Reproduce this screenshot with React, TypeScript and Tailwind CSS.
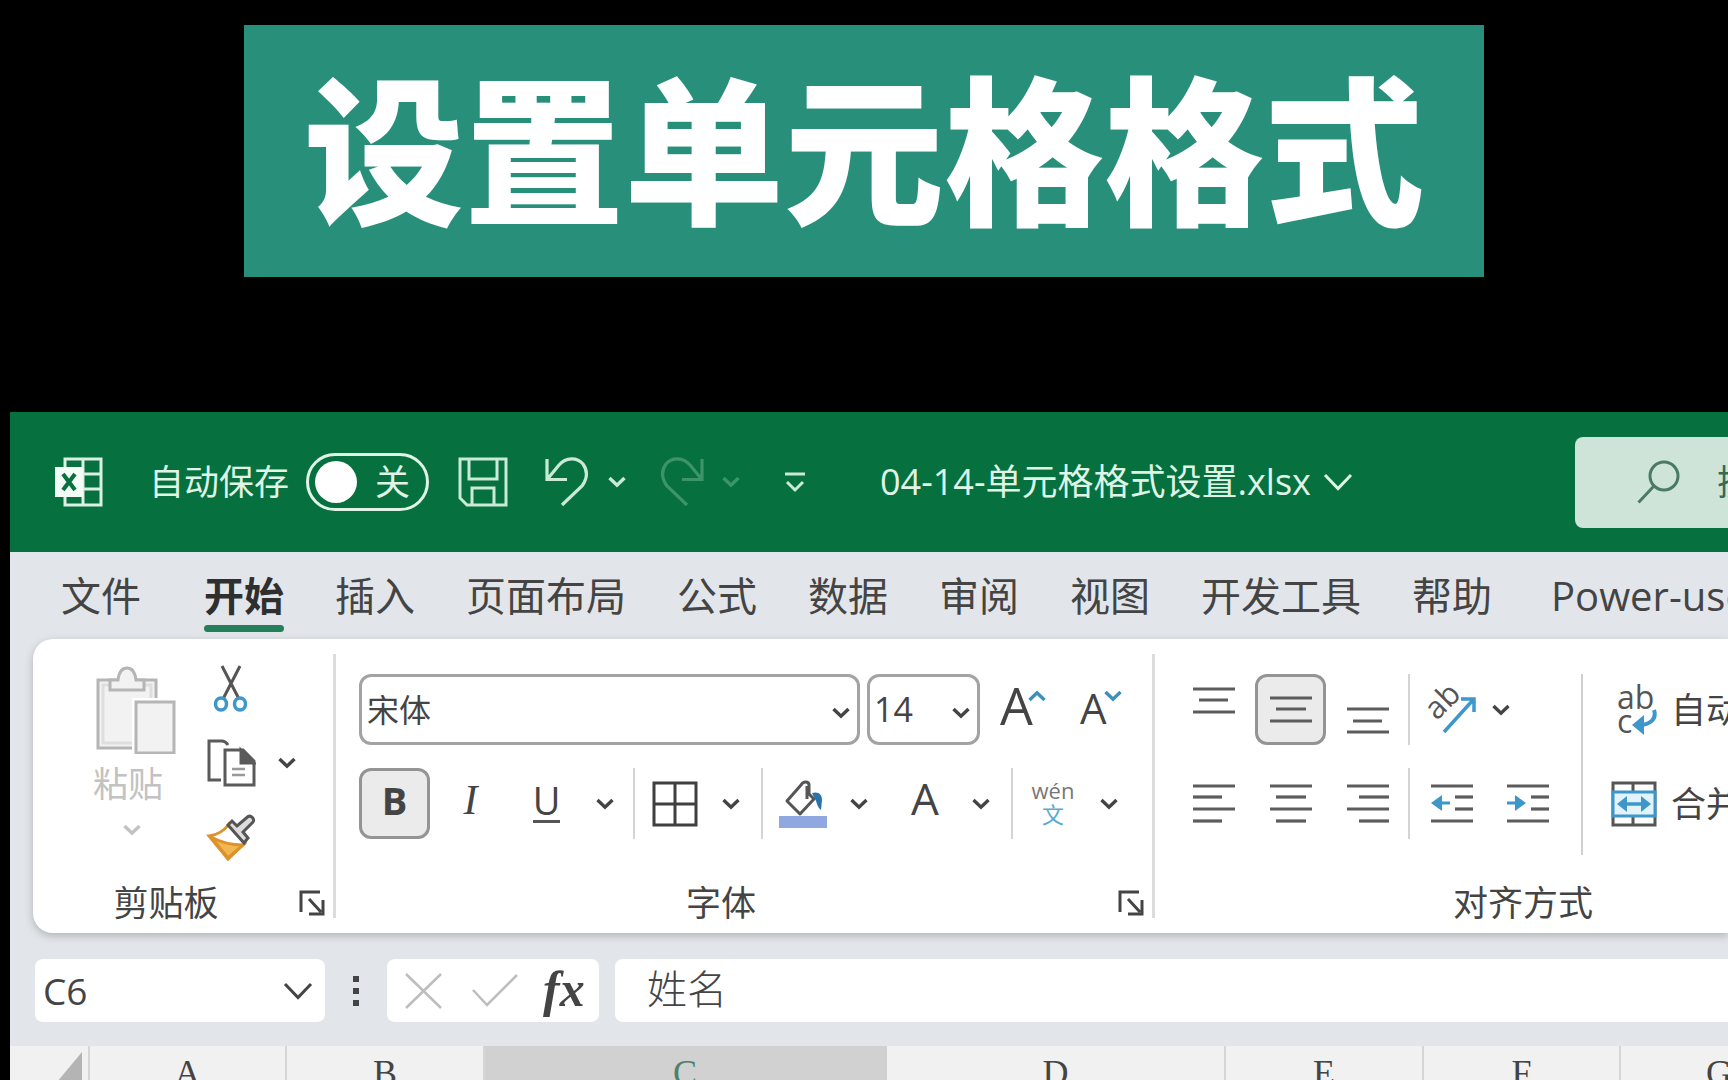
import React, { useState } from 'react';

const TABS = ['文件', '开始', '插入', '页面布局', '公式', '数据', '审阅', '视图', '开发工具', '帮助', 'Power-user'];

const COLUMNS = [
  { name: 'A', width: 'min-w-[197px]' },
  { name: 'B', width: 'min-w-[198px]' },
  { name: 'C', width: 'min-w-[402px]' },
  { name: 'D', width: 'min-w-[339px]' },
  { name: 'E', width: 'min-w-[198px]' },
  { name: 'F', width: 'min-w-[197px]' },
  { name: 'G', width: 'min-w-[198px]' },
];

const Chevron: React.FC<{ className?: string }> = ({ className = 'text-[#444]' }) => (
  <svg className={`w-[18px] h-3 shrink-0 ${className}`} viewBox="0 0 18 12" fill="none" stroke="currentColor" strokeWidth="3.4">
    <path d="M1.5 2 9 9.2 16.5 2" />
  </svg>
);

const WideChevron: React.FC<{ className?: string }> = ({ className = '' }) => (
  <svg className={`w-[30px] h-[18px] shrink-0 ${className}`} viewBox="0 0 30 18" fill="none" stroke="currentColor" strokeWidth="3">
    <path d="M2 2 15 15.5 28 2" />
  </svg>
);

const DropButton: React.FC<{ label: string }> = ({ label }) => (
  <button aria-label={label} className="w-9 h-[71px] flex items-center justify-center">
    <Chevron />
  </button>
);

// Horizontal strokes of the alignment icons: [x1, x2, y]
const Lines: React.FC<{ lines: number[][]; children?: React.ReactNode }> = ({ lines, children }) => (
  <svg className="w-11 h-12" viewBox="0 0 44 48" fill="none">
    {lines.map(([x1, x2, y]) => (
      <path key={`${x1}-${y}`} d={`M${x1} ${y}H${x2}`} stroke="#5c5c5c" strokeWidth="3.2" />
    ))}
    {children}
  </svg>
);

const Tile: React.FC<{ label: string; active?: boolean; narrow?: boolean; children: React.ReactNode }> = ({ label, active, narrow, children }) => (
  <button
    aria-label={label}
    aria-pressed={active}
    className={`h-[71px] shrink-0 flex items-center justify-center text-[#444] ${narrow ? 'w-14' : 'w-[71px]'} ${
      active ? 'bg-[#ebebeb] border-3 border-[#949494] rounded-xl' : ''
    }`}
  >
    {children}
  </button>
);

const Divider: React.FC = () => <span className="w-0.5 h-[71px] shrink-0 bg-[#d4d4d4]" />;

const GroupLabel: React.FC<{ text: string; className?: string }> = ({ text, className = '' }) => (
  <div className="flex items-center h-9">
    <span className={`flex-1 text-center text-[35px] leading-9 text-[#444] ${className}`}>{text}</span>
    <button aria-label={`${text}设置`} className="w-[26px] mr-2">
      <svg className="w-[26px] h-[26px]" viewBox="0 0 26 26" fill="none" stroke="#444" strokeWidth="3">
        <path d="M2 22V2H21M10 9 22 22M24 10V24H10" />
      </svg>
    </button>
  </div>
);

const TitleBar: React.FC = () => {
  const [autoSave, setAutoSave] = useState(false);

  return (
    <header className="h-[140px] bg-[#06713f] flex items-center pl-[45px] text-[#dff3e7]">
      <svg className="w-12 h-[50px] shrink-0" viewBox="0 0 48 50" fill="none">
        <path d="M10 2H46V48H10ZM28 2V48M10 17H46M10 32H46" stroke="#d9f0e2" strokeWidth="3" />
        <path d="M0 10H28V40H0Z" fill="#f2fbf6" />
        <path d="M8 17 20 33M20 17 8 33" stroke="#06713f" strokeWidth="4" />
      </svg>
      <span id="autosave" className="ml-[46px] shrink-0 text-[35px] leading-10">自动保存</span>
      <button
        role="switch"
        aria-checked={autoSave}
        aria-labelledby="autosave"
        onClick={() => setAutoSave(!autoSave)}
        className="ml-[17px] w-[123px] h-[58px] shrink-0 rounded-full border-3 border-[#dff3e7] flex items-center justify-between pl-1.5 pr-4"
      >
        <span className="size-[42px] rounded-full bg-white" />
        <span className="text-[35px] leading-10">{autoSave ? '开' : '关'}</span>
      </button>
      <button aria-label="保存" className="ml-[29px] shrink-0">
        <svg className="w-[50px] h-[50px]" viewBox="0 0 50 50" fill="none" stroke="#c9ead7" strokeWidth="3">
          <path d="M2 2H48V48H9L2 41ZM11 2V22H39V2M14 48V31H36V48" />
        </svg>
      </button>
      <button aria-label="撤消" className="ml-[37px] shrink-0">
        <svg className="w-11 h-[50px]" viewBox="0 0 44 50" fill="none" stroke="#c9ead7" strokeWidth="3.2">
          <path d="M2 2V22.5H22M2.500 22 14 8C21 0 32 0 38 7 43 14 42 22 37 29L17 48" />
        </svg>
      </button>
      <button aria-label="撤消选项" className="ml-[19px] shrink-0"><Chevron className="text-[#c9ead7]" /></button>
      <button aria-label="恢复" className="ml-[34px] shrink-0">
        <svg className="w-11 h-[50px]" viewBox="0 0 44 50" fill="none" stroke="#3c9468" strokeWidth="3.2">
          <path d="M42 2V22.5H22M41.500 22 30 8C23 0 12 0 6 7 1 14 2 22 7 29L27 48" />
        </svg>
      </button>
      <button aria-label="恢复选项" className="ml-[18px] shrink-0"><Chevron className="text-[#3c9468]" /></button>
      <button aria-label="自定义快速访问工具栏" className="ml-11 shrink-0">
        <svg className="w-[22px] h-[22px]" viewBox="0 0 22 22" fill="none" stroke="#c9ead7" strokeWidth="3">
          <path d="M1 3H21M3 11 11 19 19 11" />
        </svg>
      </button>
      <button className="ml-[74px] shrink-0 flex items-center gap-3">
        <span className="text-[36px] leading-10">04-14-单元格格式设置.xlsx</span>
        <WideChevron />
      </button>
      <label className="ml-[222px] h-[91px] flex-1 min-w-0 flex items-center bg-[#cfe4d9] rounded-l-lg pl-[62px] overflow-hidden">
        <svg className="w-11 h-11 shrink-0" viewBox="0 0 44 44" fill="none" stroke="#4a7a66" strokeWidth="3">
          <circle cx="27" cy="16" r="14" />
          <path d="M17 26 1.500 42.500" />
        </svg>
        <input aria-label="搜索" placeholder="搜索" className="ml-9 w-40 shrink-0 bg-transparent outline-none text-[35px] leading-10 placeholder:text-[#356a55]" />
      </label>
    </header>
  );
};

const RibbonTabs: React.FC = () => {
  const [active, setActive] = useState('开始');

  return (
    <nav className="h-[87px] flex items-start gap-[51px] pl-[51px] pt-[18px]">
      {TABS.map(tab => (
        <button
          key={tab}
          onClick={() => setActive(tab)}
          className={`shrink-0 h-[62px] flex flex-col justify-between text-[40px] leading-[52px] first:mr-3 last:ml-2 ${
            tab === active ? 'font-bold text-[#2f2f2f]' : 'text-[#444]'
          }`}
        >
          {tab}
          {tab === active && <span className="w-full h-[7px] rounded-full bg-[#23805a]" />}
        </button>
      ))}
    </nav>
  );
};

const ClipboardGroup: React.FC = () => (
  <section className="w-[300px] shrink-0">
    <div className="h-[246px] pt-[25px] pl-[60px] flex items-start">
      <button className="w-[83px] pt-0.5 flex flex-col items-start text-[#c2c2c2]">
        <svg className="w-20 h-[88px] ml-[3px]" viewBox="0 0 80 88" fill="#f2f2f2" stroke="#b5b5b5" strokeWidth="3">
          <path d="M2 14H60V82H2Z" />
          <path d="M7 19H55V77H7Z" fill="none" stroke="#dedede" />
          <path d="M14 24V14H22C23 6 26 2 31 2S39 6 40 14H48V24Z" />
          <path d="M36 32H84V92H36Z" fill="#fff" stroke="none" />
          <path d="M40 36H78V87H40Z" />
        </svg>
        <span className="mt-3 text-[35px] leading-9">粘贴</span>
        <Chevron className="mt-[22px] ml-[30px] text-[#c2c2c2]" />
      </button>
      <div className="ml-[30px] flex flex-col gap-[27px]">
        <button aria-label="剪切" className="h-12">
          <svg className="w-[50px] h-12" viewBox="0 0 50 48" fill="none" strokeWidth="3">
            <path d="M16 2 33 35M34 2 17 35" stroke="#555" />
            <ellipse cx="15" cy="40" rx="5.500" ry="6" stroke="#3d97cb" strokeWidth="3.5" />
            <ellipse cx="34" cy="40" rx="5.500" ry="6" stroke="#3d97cb" strokeWidth="3.5" />
          </svg>
        </button>
        <div className="flex items-center gap-[22px] h-12">
          <button aria-label="复制">
            <svg className="w-[50px] h-12" viewBox="0 0 50 48" fill="none" stroke="#5a5a5a" strokeWidth="3">
              <path d="M22 6C20 3 19 2 16 2H3V41H15" />
              <path d="M19 11H37L48 22V46H19Z" />
              <path d="M35 11V24H48Z" fill="#5a5a5a" />
              <path d="M26 30H39M26 36H39" strokeWidth="2.5" stroke="#999" />
            </svg>
          </button>
          <button aria-label="复制选项"><Chevron /></button>
        </div>
        <button aria-label="格式刷" className="h-12">
          <svg className="w-[50px] h-12" viewBox="0 0 50 48" fill="none" strokeWidth="3">
            <path d="M3 22C11 21 18 17 23 10L39 29 22 45Z" fill="#fff" stroke="#dd922c" />
            <path d="M5 23C14 28 24 31 37 31L22 44Z" fill="#f2b84f" stroke="#dd922c" />
            <path d="M22 11 26 7 31 12 42 2.500C45 1 49 5 47 8L37 18 42 24 38 29Z" fill="#ddd" stroke="#555" />
          </svg>
        </button>
      </div>
    </div>
    <GroupLabel text="剪贴板" />
  </section>
);

const FontGroup: React.FC = () => (
  <section className="w-[816px] shrink-0">
    <div className="h-[246px] pt-[35px] pl-[23px] flex flex-col gap-[23px]">
      <div className="flex items-center h-[71px]">
        <div className="relative w-[501px]">
          <select aria-label="字体" className="appearance-none w-full h-[71px] pl-[5px] border-3 border-[#a3a3a3] rounded-xl bg-white text-[32px] text-[#444]">
            <option>宋体</option>
          </select>
          <Chevron className="absolute right-2.5 top-[33px] pointer-events-none text-[#444]" />
        </div>
        <div className="relative w-[113px] ml-[7px]">
          <select aria-label="字号" defaultValue="14" className="appearance-none w-full h-[71px] pl-1 border-3 border-[#a3a3a3] rounded-xl bg-white text-[34px] text-[#444]">
            <option>12</option>
            <option>14</option>
            <option>16</option>
          </select>
          <Chevron className="absolute right-2.5 top-[33px] pointer-events-none text-[#444]" />
        </div>
        <button aria-label="增大字号" className="relative ml-5 w-[46px] h-[71px] text-left text-[52px] leading-[60px] pb-2.5 text-[#444]">
          A
          <Chevron className="absolute right-0 top-4 rotate-180 text-[#3d8fbe]" />
        </button>
        <button aria-label="减小字号" className="relative ml-[34px] w-[42px] h-[71px] text-left text-[42px] leading-[68px] pb-1 text-[#444]">
          A
          <Chevron className="absolute right-0 top-4 text-[#3d8fbe]" />
        </button>
      </div>
      <div className="flex items-center h-[71px]">
        <div className="flex gap-[5px] mr-2.5">
          <Tile label="加粗" active><span className="text-[38px] leading-[52px] font-bold pb-2">B</span></Tile>
          <Tile label="倾斜"><span className="font-['Liberation_Serif',serif] text-[42px] leading-[52px] italic pb-2">I</span></Tile>
          <Tile label="下划线"><span className="text-[38px] leading-[40px] border-b-3 border-[#555] mb-1">U</span></Tile>
          <DropButton label="下划线选项" />
        </div>
        <Divider />
        <div className="flex gap-2.5 mx-3">
          <Tile label="边框" narrow>
            <svg className="w-[46px] h-[46px]" viewBox="0 0 46 46" fill="none" stroke="#3f3f3f" strokeWidth="3">
              <path d="M2 2H44V44H2ZM23 2V44M2 23H44" />
            </svg>
          </Tile>
          <DropButton label="边框选项" />
        </div>
        <Divider />
        <div className="flex gap-2.5 mx-3">
          <Tile label="填充颜色" narrow>
            <svg className="w-12 h-12" viewBox="0 0 48 48" fill="none">
              <path d="M22 5 8 21 21 34 35 19 30 14V5C30 1 24 1 22 5ZM28 6V19" stroke="#555" strokeWidth="3" strokeLinejoin="round" />
              <path d="M33 13C40 11 43 15 43 20L42 30C38 27 38 22 36 19Z" fill="#2673ad" />
              <path d="M0 36H48V48H0Z" fill="#8fa9e0" />
            </svg>
          </Tile>
          <DropButton label="填充颜色选项" />
        </div>
        <div className="flex gap-2.5 ml-2 mr-3">
          <Tile label="字体颜色" narrow><span className="text-[44px] leading-[52px] pb-3">A</span></Tile>
          <DropButton label="字体颜色选项" />
        </div>
        <Divider />
        <div className="flex gap-2.5 mx-3">
          <Tile label="拼音指南" narrow>
            <span className="flex flex-col items-center text-[22px] leading-6 pb-1 text-[#777]">
              wén
              <span className="text-[#5aaace]">文</span>
            </span>
          </Tile>
          <DropButton label="拼音指南选项" />
        </div>
      </div>
    </div>
    <GroupLabel text="字体" className="pr-3" />
  </section>
);

const AlignGroup: React.FC = () => (
  <section className="w-[770px] shrink-0">
    <div className="h-[246px] pt-[35px] pl-[23px] flex items-start">
      <div className="w-[403px] flex flex-col gap-[23px]">
        <div className="flex items-center">
          <div className="flex gap-1.5 mr-[5px]">
            <Tile label="顶端对齐"><Lines lines={[[1, 43, 3], [7, 36, 14], [1, 43, 26]]} /></Tile>
            <Tile label="垂直居中" active><Lines lines={[[1, 43, 12], [7, 37, 23], [1, 43, 35]]} /></Tile>
            <Tile label="底端对齐"><Lines lines={[[1, 43, 23], [7, 36, 35], [1, 43, 46]]} /></Tile>
          </div>
          <Divider />
          <div className="flex gap-[3px] ml-3.5">
            <Tile label="方向" narrow>
              <span className="relative w-[50px] h-12">
                <span className="absolute -left-1 -top-1 text-[31px] leading-9 -rotate-45 text-[#555]">ab</span>
                <svg className="absolute inset-0 w-[50px] h-12" viewBox="0 0 50 48" fill="none" stroke="#3d97cb" strokeWidth="3.5">
                  <path d="M17 46 46 14M34 13H47V26" />
                </svg>
              </span>
            </Tile>
            <DropButton label="方向选项" />
          </div>
        </div>
        <div className="flex items-center">
          <div className="flex gap-1.5 mr-[5px]">
            <Tile label="左对齐"><Lines lines={[[1, 43, 6], [1, 30, 17], [1, 43, 29], [1, 30, 41]]} /></Tile>
            <Tile label="居中"><Lines lines={[[1, 43, 6], [7, 37, 17], [1, 43, 29], [7, 37, 41]]} /></Tile>
            <Tile label="右对齐"><Lines lines={[[1, 43, 6], [13, 43, 17], [1, 43, 29], [13, 43, 41]]} /></Tile>
          </div>
          <Divider />
          <div className="flex gap-5 ml-3.5">
            <Tile label="减少缩进量" narrow>
              <Lines lines={[[1, 43, 6], [25, 43, 17], [25, 43, 29], [1, 43, 41]]}>
                <path d="M1 23 12 15V31Z" fill="#3d97cb" />
                <path d="M9 23H20" stroke="#3d97cb" strokeWidth="3" />
              </Lines>
            </Tile>
            <Tile label="增加缩进量" narrow>
              <Lines lines={[[1, 43, 6], [25, 43, 17], [25, 43, 29], [1, 43, 41]]}>
                <path d="M20 23 9 15V31Z" fill="#3d97cb" />
                <path d="M1 23H12" stroke="#3d97cb" strokeWidth="3" />
              </Lines>
            </Tile>
          </div>
        </div>
      </div>
      <span className="w-0.5 h-[181px] shrink-0 bg-[#d0d0d0]" />
      <div className="ml-7 flex flex-col gap-[23px] text-[35px] leading-10 text-[#444]">
        <button className="h-[71px] flex items-center gap-3.5 whitespace-nowrap">
          <span className="relative w-[46px] h-[50px] pl-1.5 text-left text-[32px] leading-6 text-[#555]">
            ab<br />c
            <svg className="absolute right-0 bottom-0 w-[26px] h-[26px]" viewBox="0 0 26 26" fill="none">
              <path d="M23 1C26 10 19 16 8 16" stroke="#3d97cb" strokeWidth="4" />
              <path d="M1 16 13 6V26Z" fill="#3d97cb" />
            </svg>
          </span>
          自动换行
        </button>
        <button className="h-[71px] flex items-center gap-3.5 whitespace-nowrap">
          <svg className="w-[46px] h-[46px]" viewBox="0 0 46 46" fill="none" strokeWidth="3">
            <path d="M2 2H44V44H2ZM22 2V12M22 36V44" stroke="#555" />
            <path d="M2 11H44V35H2Z" fill="#e3f3fb" stroke="#3d97cb" />
            <path d="M12 23H34" stroke="#3d97cb" strokeWidth="3.5" />
            <path d="M6 23 16 15V31ZM40 23 30 15V31Z" fill="#3d97cb" />
          </svg>
          合并后居中
        </button>
      </div>
    </div>
    <GroupLabel text="对齐方式" />
  </section>
);

const FormulaBar: React.FC = () => {
  const [value, setValue] = useState('姓名');

  return (
    <div className="mt-[26px] mb-6 ml-[25px] h-[63px] flex items-stretch text-[#444]">
      <div className="w-[290px] shrink-0 flex items-center bg-white rounded-lg pl-2 pr-3">
        <input aria-label="名称框" defaultValue="C6" className="flex-1 min-w-0 bg-transparent outline-none text-[37px] leading-[52px]" />
        <button aria-label="名称列表"><WideChevron /></button>
      </div>
      <svg className="w-2 h-8 mx-[27px] self-center shrink-0" viewBox="0 0 8 32" fill="#444">
        <path d="M1 1H7V7H1ZM1 13H7V19H1ZM1 25H7V31H1Z" />
      </svg>
      <div className="w-[212px] shrink-0 flex items-center bg-white rounded-lg pl-4">
        <button aria-label="取消">
          <svg className="w-10 h-9" viewBox="0 0 40 36" fill="none" stroke="#bdbdbd" strokeWidth="2.5">
            <path d="M3 1 38 35M38 1 3 35" />
          </svg>
        </button>
        <button aria-label="输入" className="ml-7">
          <svg className="w-12 h-9" viewBox="0 0 48 36" fill="none" stroke="#bdbdbd" strokeWidth="2.5">
            <path d="M2 17 16 32 46 2" />
          </svg>
        </button>
        <button aria-label="插入函数" className="ml-6 font-['Liberation_Serif',serif] text-[50px] leading-[56px] italic font-bold pb-1">fx</button>
      </div>
      <input
        aria-label="编辑栏"
        value={value}
        onChange={e => setValue(e.target.value)}
        className="ml-4 flex-1 min-w-0 bg-white rounded-l-lg pl-8 pb-1 outline-none text-[40px] font-light"
      />
    </div>
  );
};

const App: React.FC = () => (
  <div className="h-screen overflow-hidden bg-black flex flex-col font-['Open_Sans','Noto_Sans_CJK_SC',sans-serif]">
    <h1 className="mt-[25px] mx-auto shrink-0 px-[60px] h-[252px] bg-[#28907a] text-white text-[160px] leading-[252px] font-black whitespace-nowrap">
      设置单元格格式
    </h1>

    <main className="mt-[135px] ml-2.5 flex-1 bg-[#e2e6ea] overflow-hidden">
      <TitleBar />
      <RibbonTabs />

      <div className="ml-[23px] h-[294px] flex bg-white rounded-l-[20px] shadow-[0_3px_8px_rgba(0,0,0,0.22)] overflow-hidden">
        <ClipboardGroup />
        <span className="w-[3px] my-[15px] shrink-0 bg-[#dcdcdc]" />
        <FontGroup />
        <span className="w-[3px] my-[15px] shrink-0 bg-[#dcdcdc]" />
        <AlignGroup />
      </div>

      <FormulaBar />

      <table className="border-separate border-spacing-0 bg-[#f1f1f2]">
        <thead>
          <tr>
            <th aria-label="全选" className="min-w-20 h-12 p-0 border-r-2 border-[#d5d5d5]">
              <svg className="w-[30px] h-9 ml-[42px]" viewBox="0 0 30 36" fill="#b4b4b4">
                <path d="M30 0V36H0Z" />
              </svg>
            </th>
            {COLUMNS.map(col => (
              <th
                key={col.name}
                scope="col"
                className={`${col.width} h-12 p-0 pt-1.5 border-r-2 font-['Liberation_Serif',serif] font-normal text-[36px] leading-9 ${
                  col.name === 'C' ? 'bg-[#d1d1d2] border-[#d1d1d2] text-[#4f8068]' : 'border-[#d5d5d5] text-[#444]'
                }`}
              >
                {col.name}
              </th>
            ))}
          </tr>
        </thead>
      </table>
    </main>
  </div>
);

export default App;
